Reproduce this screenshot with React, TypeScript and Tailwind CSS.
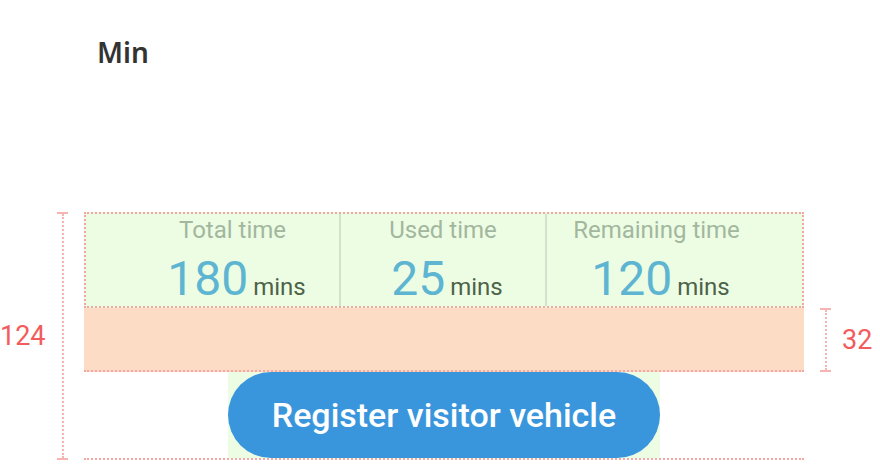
const stats = [
  { label: 'Total time', value: '180' },
  { label: 'Used time', value: '25' },
  { label: 'Remaining time', value: '120' },
];

// 寸法線（縦）
function DimLine() {
  return (
    <div className="flex h-full w-[11px] flex-col items-center">
      <div className="h-[2px] w-[11px] bg-[#f8b3b3]" />
      <div className="w-0 flex-1 border-l-2 border-dotted border-[#f8b3b3]" />
      <div className="h-[2px] w-[11px] bg-[#f8b3b3]" />
    </div>
  );
}

function StatCell({ label, value, className }: { label: string; value: string; className: string }) {
  return (
    <div className={`flex flex-col items-center pt-[4px] ${className}`}>
      <span className="text-[24px] leading-none text-[#a2b79e]">{label}</span>
      <div className="mt-[13px] flex items-baseline pl-[8px]">
        <span className="text-[48px] leading-none text-[#5db5d2]">{value}</span>
        <span className="ml-[5px] text-[24px] leading-none text-[#4c6249]">mins</span>
      </div>
    </div>
  );
}

export default function App() {
  return (
    <div
      className="flex h-[474px] w-[880px] flex-col bg-white"
      style={{ fontFamily: 'Roboto, "Noto Sans", sans-serif' }}
    >
      {/* タイトル */}
      <div className="h-[212px] pl-[97px] pt-[38px]">
        <h1
          className="text-[28px] font-semibold leading-none text-[#333333]"
          style={{ fontFamily: '"Noto Sans", sans-serif' }}
        >
          Min
        </h1>
      </div>

      <div className="flex">
        {/* 左の寸法 */}
        <div className="flex h-[248px] w-[84px] items-center">
          <span className="w-[45px] text-right text-[27px] leading-none text-[#f25c5c]">124</span>
          <div className="ml-[12px] h-full">
            <DimLine />
          </div>
        </div>

        {/* 本体 */}
        <div className="flex w-[720px] flex-col">
          <div className="flex h-[96px] border-2 border-dotted border-[#f6a7a2] bg-[#edfde4]">
            <StatCell {...stats[0]} className="w-[253px] pl-[40px]" />
            <StatCell {...stats[1]} className="w-[208px] border-x-2 border-[#d2e3cd]" />
            <StatCell {...stats[2]} className="flex-1 pr-[36px]" />
          </div>
          <div className="h-[64px] border-b-2 border-dotted border-[#f6a7a2] bg-[#fddcc6]" />
          <div className="flex h-[88px] justify-center border-b-2 border-dotted border-[#f6a7a2]">
            <div className="w-[432px] bg-[#edfde4]">
              <button className="flex h-full w-full items-center justify-center rounded-full bg-[#3a96dc] text-[34px] font-medium text-white">
                Register visitor vehicle
              </button>
            </div>
          </div>
        </div>

        {/* 右の寸法 */}
        <div className="ml-[16px] flex flex-col pt-[96px]">
          <div className="flex h-[64px] items-center">
            <div className="h-full">
              <DimLine />
            </div>
            <span className="ml-[11px] text-[27px] leading-none text-[#f25c5c]">32</span>
          </div>
        </div>
      </div>
    </div>
  );
}
